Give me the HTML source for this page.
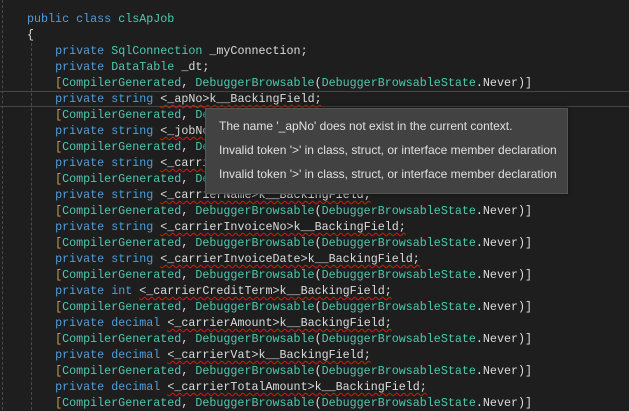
<!DOCTYPE html>
<html><head><style>
body{margin:0;width:629px;height:410px;background:#1e1e1e;overflow:hidden;position:relative}
.code{position:absolute;left:27px;top:11px;font-family:"Liberation Mono",monospace;font-size:11.7px;line-height:16px;color:#dcdcdc;white-space:pre}
.k{color:#569cd6}.t{color:#4ec9b0}.b{color:#d7a04a}
.e{text-decoration:underline wavy #e51400;text-decoration-thickness:1px;text-underline-offset:2px}
.guide{position:absolute;top:0;height:410px;border-left:1px dashed #4a4a4a}
.cur{position:absolute;left:0;top:91px;width:629px;height:14px;border-top:1px solid #464646;border-bottom:1px solid #464646}
.tip{position:absolute;left:205px;top:108px;width:361px;height:84px;background:#424242;border:1px solid #555;font-family:"Liberation Sans",sans-serif;font-size:12px;color:#e0e0e0;box-shadow:0 0 4px #111}
.tip div{position:absolute;left:13px}
</style></head><body>
<div class="guide" style="left:2px"></div>
<div class="guide" style="left:31px;top:43px;height:367px"></div>
<div class="cur"></div>
<div class="code"><span class="k">public class</span> <span class="t">clsApJob</span>
{
    <span class="k">private</span> <span class="t">SqlConnection</span> _myConnection;
    <span class="k">private</span> <span class="t">DataTable</span> _dt;
    <span class="b">[</span><span class="t">CompilerGenerated</span>, <span class="t">DebuggerBrowsable</span>(<span class="t">DebuggerBrowsableState</span>.Never)]
    <span class="k">private</span> <span class="k">string</span> <span class="e">&lt;_apNo&gt;k__BackingField;</span>
    <span class="b">[</span><span class="t">CompilerGenerated</span>, <span class="t">DebuggerBrowsable</span>(<span class="t">DebuggerBrowsableState</span>.Never)]
    <span class="k">private</span> <span class="k">string</span> <span class="e">&lt;_jobNo&gt;k__BackingField;</span>
    <span class="b">[</span><span class="t">CompilerGenerated</span>, <span class="t">DebuggerBrowsable</span>(<span class="t">DebuggerBrowsableState</span>.Never)]
    <span class="k">private</span> <span class="k">string</span> <span class="e">&lt;_carrierCode&gt;k__BackingField;</span>
    <span class="b">[</span><span class="t">CompilerGenerated</span>, <span class="t">DebuggerBrowsable</span>(<span class="t">DebuggerBrowsableState</span>.Never)]
    <span class="k">private</span> <span class="k">string</span> <span class="e">&lt;_carrierName&gt;k__BackingField;</span>
    <span class="b">[</span><span class="t">CompilerGenerated</span>, <span class="t">DebuggerBrowsable</span>(<span class="t">DebuggerBrowsableState</span>.Never)]
    <span class="k">private</span> <span class="k">string</span> <span class="e">&lt;_carrierInvoiceNo&gt;k__BackingField;</span>
    <span class="b">[</span><span class="t">CompilerGenerated</span>, <span class="t">DebuggerBrowsable</span>(<span class="t">DebuggerBrowsableState</span>.Never)]
    <span class="k">private</span> <span class="k">string</span> <span class="e">&lt;_carrierInvoiceDate&gt;k__BackingField;</span>
    <span class="b">[</span><span class="t">CompilerGenerated</span>, <span class="t">DebuggerBrowsable</span>(<span class="t">DebuggerBrowsableState</span>.Never)]
    <span class="k">private</span> <span class="k">int</span> <span class="e">&lt;_carrierCreditTerm&gt;k__BackingField;</span>
    <span class="b">[</span><span class="t">CompilerGenerated</span>, <span class="t">DebuggerBrowsable</span>(<span class="t">DebuggerBrowsableState</span>.Never)]
    <span class="k">private</span> <span class="k">decimal</span> <span class="e">&lt;_carrierAmount&gt;k__BackingField;</span>
    <span class="b">[</span><span class="t">CompilerGenerated</span>, <span class="t">DebuggerBrowsable</span>(<span class="t">DebuggerBrowsableState</span>.Never)]
    <span class="k">private</span> <span class="k">decimal</span> <span class="e">&lt;_carrierVat&gt;k__BackingField;</span>
    <span class="b">[</span><span class="t">CompilerGenerated</span>, <span class="t">DebuggerBrowsable</span>(<span class="t">DebuggerBrowsableState</span>.Never)]
    <span class="k">private</span> <span class="k">decimal</span> <span class="e">&lt;_carrierTotalAmount&gt;k__BackingField;</span>
    <span class="b">[</span><span class="t">CompilerGenerated</span>, <span class="t">DebuggerBrowsable</span>(<span class="t">DebuggerBrowsableState</span>.Never)]</div>
<div class="tip">
<div style="top:10px">The name '_apNo' does not exist in the current context.</div>
<div style="top:34px">Invalid token '&gt;' in class, struct, or interface member declaration</div>
<div style="top:58px">Invalid token '&gt;' in class, struct, or interface member declaration</div>
</div>
</body></html>
